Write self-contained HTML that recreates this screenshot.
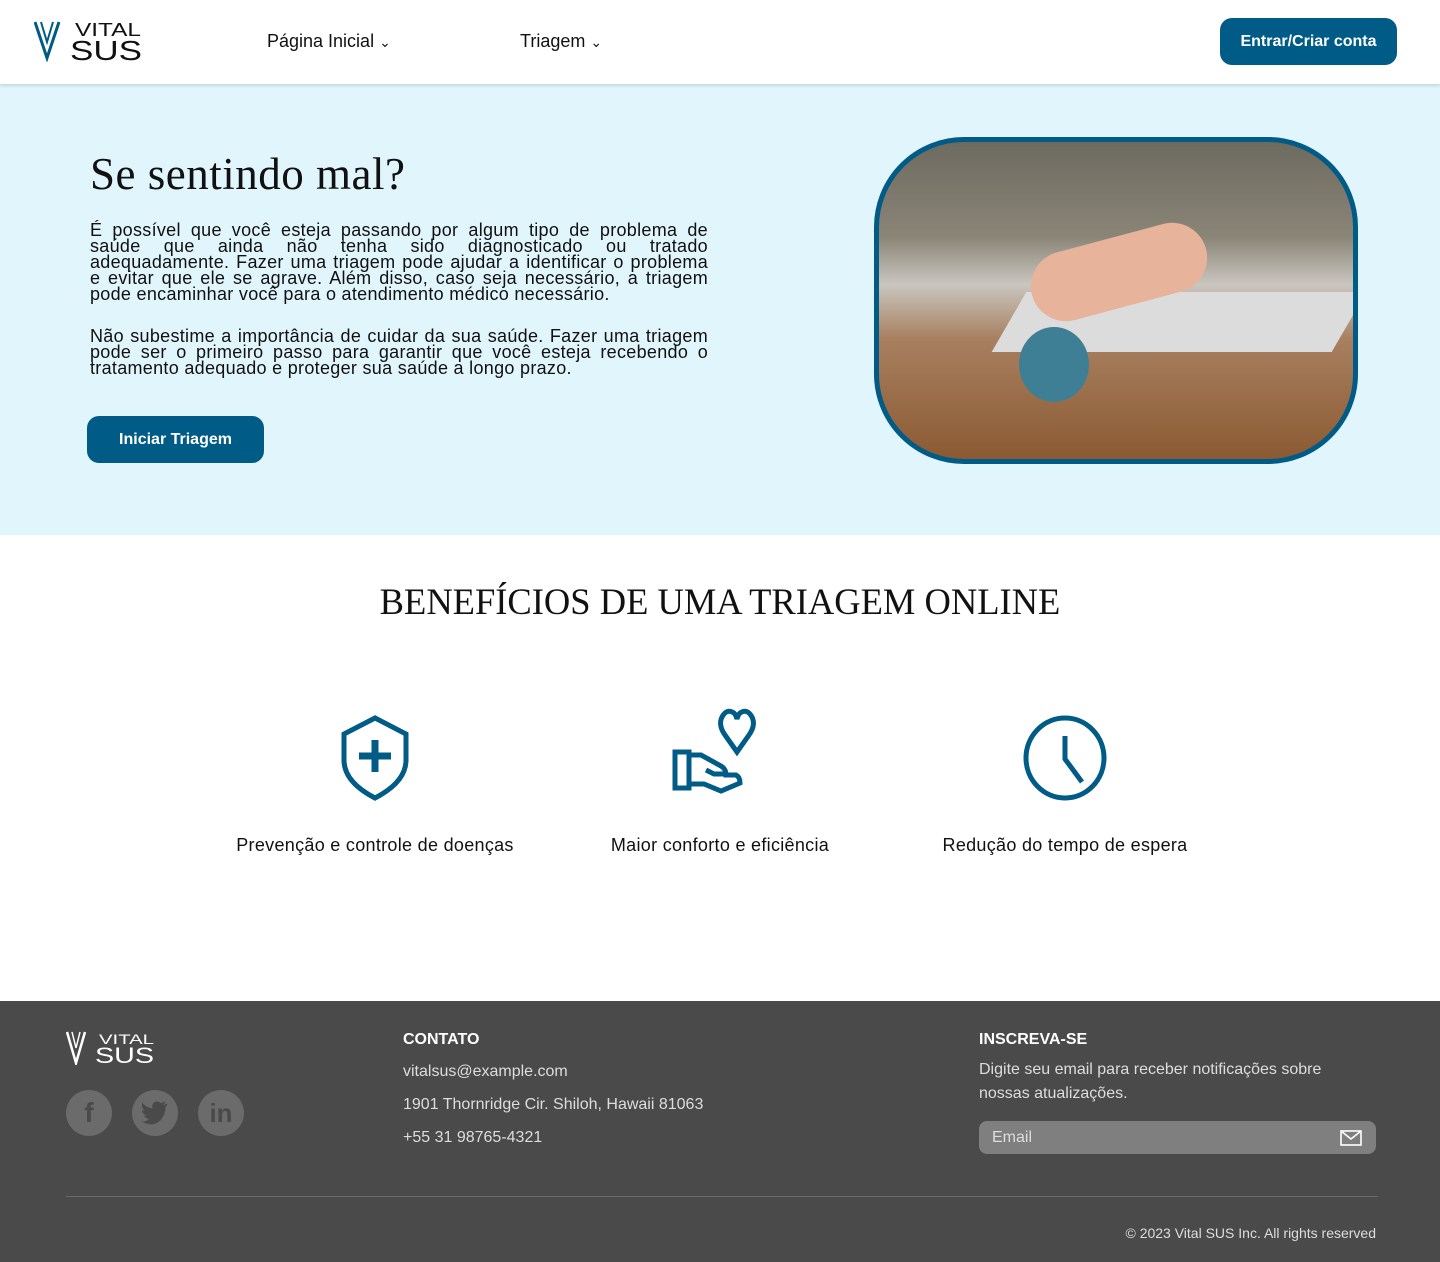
<!DOCTYPE html>
<html><head><meta charset="utf-8"><style>
*{margin:0;padding:0;box-sizing:border-box}
body{width:1440px;height:1262px;font-family:"Liberation Sans",sans-serif;color:#111;background:#fff;position:relative;overflow:hidden}
.abs{position:absolute}
header{position:absolute;left:0;top:0;width:1440px;height:84px;background:#fff;box-shadow:0 2px 3px rgba(0,0,0,.12);z-index:2}
.nav{font-size:18px;color:#111;top:31px}
.btn{background:#005b86;color:#fff;font-weight:bold;font-size:16px;border-radius:12px;display:flex;align-items:center;justify-content:center}
.hero{left:0;top:84px;width:1440px;height:451px;background:#e1f5fd}
.p{left:90px;width:618px;font-size:18px;line-height:16px;text-align:justify;color:#111;letter-spacing:.3px}
.feat{font-size:18px;text-align:center;width:360px;top:835px;letter-spacing:.3px}
footer{position:absolute;left:0;top:1001px;width:1440px;height:261px;background:#4a4a4a;color:#e6e6e6}
.fh{font-weight:bold;font-size:16px;color:#fff}
.ft{font-size:16px;color:#ddd}
.soc{width:46px;height:46px;border-radius:50%;background:#6b6b6b;top:89px;display:flex;align-items:center;justify-content:center;color:#4a4a4a;font-weight:bold;font-size:28px}
</style></head><body>
<header>
<svg class="abs" style="left:34px;top:20px" width="110" height="42" viewBox="0 0 110 42">
<path d="M1 2 L13 38 L25 2" fill="none" stroke="#005b86" stroke-width="3"/>
<path d="M7 2 L13 22 L19 2" fill="none" stroke="#005b86" stroke-width="2"/>
<text x="41" y="16" font-family="Liberation Sans" font-size="18" textLength="66" lengthAdjust="spacingAndGlyphs" fill="#111">VITAL</text>
<text x="36" y="40" font-family="Liberation Sans" font-size="28" textLength="72" lengthAdjust="spacingAndGlyphs" fill="#111">SUS</text>
</svg>
<div class="abs nav" style="left:267px">Página Inicial <span style="font-size:14px">&#8964;</span></div>
<div class="abs nav" style="left:520px">Triagem <span style="font-size:14px">&#8964;</span></div>
<div class="abs btn" style="left:1220px;top:18px;width:177px;height:47px">Entrar/Criar conta</div>
</header>
<div class="abs hero"></div>
<div class="abs" style="left:90px;top:148px;font-family:'Liberation Serif',serif;font-size:45px;letter-spacing:.5px">Se sentindo mal?</div>
<div class="abs p" style="top:222px">É possível que você esteja passando por algum tipo de problema de saúde que ainda não tenha sido diagnosticado ou tratado adequadamente. Fazer uma triagem pode ajudar a identificar o problema e evitar que ele se agrave. Além disso, caso seja necessário, a triagem pode encaminhar você para o atendimento médico necessário.</div>
<div class="abs p" style="top:328px">Não subestime a importância de cuidar da sua saúde. Fazer uma triagem pode ser o primeiro passo para garantir que você esteja recebendo o tratamento adequado e proteger sua saúde a longo prazo.</div>
<div class="abs btn" style="left:87px;top:416px;width:177px;height:47px">Iniciar Triagem</div>
<div class="abs" style="left:874px;top:137px;width:484px;height:327px;border:5px solid #005b86;border-radius:90px;overflow:hidden;background:linear-gradient(180deg,#6d6a60 0%,#8a8577 30%,#c9c6bf 45%,#a88060 62%,#8b5a32 100%)">
<div class="abs" style="left:130px;top:150px;width:340px;height:60px;background:#dcdcdc;transform:skewX(-30deg)"></div>
<div class="abs" style="left:150px;top:95px;width:180px;height:70px;border-radius:40px;background:#e7b39a;transform:rotate(-15deg)"></div>
<div class="abs" style="left:140px;top:185px;width:70px;height:75px;border-radius:50%;background:#3f7f95"></div>
</div>
<div class="abs" style="left:0;top:580px;width:1440px;text-align:center;font-family:'Liberation Serif',serif;font-size:36.5px">BENEFÍCIOS DE UMA TRIAGEM ONLINE</div>
<svg class="abs" style="left:330px;top:710px" width="90" height="95" viewBox="0 0 90 95">
<path d="M45 8 L14 24 L14 50 Q14 72 45 88 Q76 72 76 50 L76 24 Z" fill="none" stroke="#005b86" stroke-width="5"/>
<path d="M45 30 V62 M29 46 H61" stroke="#005b86" stroke-width="7"/>
</svg>
<svg class="abs" style="left:670px;top:705px" width="100" height="95" viewBox="0 0 100 95">
<path d="M67 47 L55 30 Q48 20 52 12 Q57 3 64 8 Q66 10 67 14 Q68 10 70 8 Q77 3 82 12 Q86 20 79 30 Z" fill="none" stroke="#005b86" stroke-width="5"/>
<path d="M5 47 H19 V83 H5 Z M19 50 H31 L51 61 Q56 64 56 70 H66 Q70 72 70 78 L51 86 L34 79 H19" fill="none" stroke="#005b86" stroke-width="5"/>
<path d="M36 65 L44 69 H56" fill="none" stroke="#005b86" stroke-width="5"/>
</svg>
<svg class="abs" style="left:1020px;top:712px" width="90" height="92" viewBox="0 0 90 92">
<ellipse cx="45" cy="46" rx="39" ry="40" fill="none" stroke="#005b86" stroke-width="5"/>
<path d="M45 24 V47 L62 70" fill="none" stroke="#005b86" stroke-width="5"/>
</svg>
<div class="abs feat" style="left:195px">Prevenção e controle de doenças</div>
<div class="abs feat" style="left:540px">Maior conforto e eficiência</div>
<div class="abs feat" style="left:885px">Redução do tempo de espera</div>
<footer>
<svg class="abs" style="left:66px;top:30px" width="90" height="34" viewBox="0 0 90 34">
<path d="M1 1 L10 32 L19 1" fill="none" stroke="#fff" stroke-width="2.5"/>
<path d="M6 1 L10 17 L14 1" fill="none" stroke="#fff" stroke-width="1.5"/>
<text x="33" y="13" font-family="Liberation Sans" font-size="14" textLength="55" lengthAdjust="spacingAndGlyphs" fill="#fff">VITAL</text>
<text x="29" y="32" font-family="Liberation Sans" font-size="22" textLength="59" lengthAdjust="spacingAndGlyphs" fill="#fff">SUS</text>
</svg>
<div class="abs soc" style="left:66px">f</div>
<div class="abs soc" style="left:132px"><svg width="28" height="24" viewBox="0 0 24 20"><path d="M23 2 Q20 3 19 3 Q21 1 21 0 Q19 1 17 1.5 Q14 -1 11 1 Q9 3 10 6 Q5 6 1 1 Q0 5 3 8 Q2 8 1 7.5 Q1 11 5 12 Q4 12.5 2.5 12 Q4 15 7 15 Q4 18 0 17 Q10 23 17 16 Q21 11 21 5 Q22 4 23 2Z" fill="#4a4a4a"/></svg></div>
<div class="abs soc" style="left:198px;font-size:26px">in</div>
<div class="abs fh" style="left:403px;top:30px">CONTATO</div>
<div class="abs ft" style="left:403px;top:62px">vitalsus@example.com</div>
<div class="abs ft" style="left:403px;top:95px">1901 Thornridge Cir. Shiloh, Hawaii 81063</div>
<div class="abs ft" style="left:403px;top:128px">+55 31 98765-4321</div>
<div class="abs fh" style="left:979px;top:30px">INSCREVA-SE</div>
<div class="abs ft" style="left:979px;top:57px;width:380px;line-height:24px">Digite seu email para receber notificações sobre nossas atualizações.</div>
<div class="abs" style="left:979px;top:120px;width:397px;height:33px;background:#7f7f7f;border-radius:8px;color:#ddd;font-size:16px;padding:8px 13px">Email
<svg class="abs" style="right:14px;top:9px" width="22" height="16" viewBox="0 0 22 16"><rect x="1" y="1" width="20" height="14" fill="none" stroke="#fff" stroke-width="1.6"/><path d="M1 1 L11 9 L21 1" fill="none" stroke="#fff" stroke-width="1.6"/></svg></div>
<div class="abs" style="left:66px;top:195px;width:1312px;height:1px;background:#6a6a6a"></div>
<div class="abs" style="right:64px;top:224px;font-size:14px;color:#ddd">© 2023 Vital SUS Inc. All rights reserved</div>
</footer>
</body></html>
